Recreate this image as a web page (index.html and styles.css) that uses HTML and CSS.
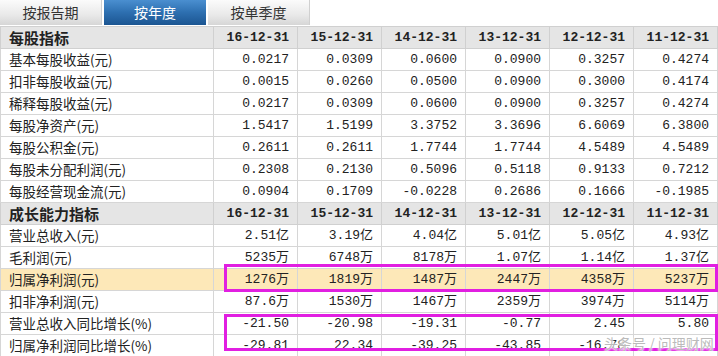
FILE: index.html
```html
<!DOCTYPE html>
<html lang="zh">
<head>
<meta charset="utf-8">
<link rel="stylesheet" href="styles.css">
</head>
<body>
<div class="page">
  <div class="tabs">
    <div class="tab">按报告期</div>
    <div class="tab active">按年度</div>
    <div class="tab">按单季度</div>
  </div>
  <table class="grid">
    <colgroup><col class="c0"><col class="cn"><col class="cn"><col class="cn"><col class="cn"><col class="cn"><col class="cn"></colgroup>
    <tr class="head"><th class="lab">每股指标</th><th>16-12-31</th><th>15-12-31</th><th>14-12-31</th><th>13-12-31</th><th>12-12-31</th><th>11-12-31</th></tr>
    <tr><td class="lab">基本每股收益(元)</td><td>0.0217</td><td>0.0309</td><td>0.0600</td><td>0.0900</td><td>0.3257</td><td>0.4274</td></tr>
    <tr><td class="lab">扣非每股收益(元)</td><td>0.0015</td><td>0.0260</td><td>0.0500</td><td>0.0900</td><td>0.3000</td><td>0.4174</td></tr>
    <tr><td class="lab">稀释每股收益(元)</td><td>0.0217</td><td>0.0309</td><td>0.0600</td><td>0.0900</td><td>0.3257</td><td>0.4274</td></tr>
    <tr><td class="lab">每股净资产(元)</td><td>1.5417</td><td>1.5199</td><td>3.3752</td><td>3.3696</td><td>6.6069</td><td>6.3800</td></tr>
    <tr><td class="lab">每股公积金(元)</td><td>0.2611</td><td>0.2611</td><td>1.7744</td><td>1.7744</td><td>4.5489</td><td>4.5489</td></tr>
    <tr><td class="lab">每股未分配利润(元)</td><td>0.2308</td><td>0.2130</td><td>0.5096</td><td>0.5118</td><td>0.9133</td><td>0.7212</td></tr>
    <tr><td class="lab">每股经营现金流(元)</td><td>0.0904</td><td>0.1709</td><td>-0.0228</td><td>0.2686</td><td>0.1666</td><td>-0.1985</td></tr>
    <tr class="head"><th class="lab">成长能力指标</th><th>16-12-31</th><th>15-12-31</th><th>14-12-31</th><th>13-12-31</th><th>12-12-31</th><th>11-12-31</th></tr>
    <tr><td class="lab">营业总收入(元)</td><td>2.51亿</td><td>3.19亿</td><td>4.04亿</td><td>5.01亿</td><td>5.05亿</td><td>4.93亿</td></tr>
    <tr><td class="lab">毛利润(元)</td><td>5235万</td><td>6748万</td><td>8178万</td><td>1.07亿</td><td>1.14亿</td><td>1.37亿</td></tr>
    <tr class="hl"><td class="lab">归属净利润(元)</td><td>1276万</td><td>1819万</td><td>1487万</td><td>2447万</td><td>4358万</td><td>5237万</td></tr>
    <tr><td class="lab">扣非净利润(元)</td><td>87.6万</td><td>1530万</td><td>1467万</td><td>2359万</td><td>3974万</td><td>5114万</td></tr>
    <tr><td class="lab">营业总收入同比增长(%)</td><td>-21.50</td><td>-20.98</td><td>-19.31</td><td>-0.77</td><td>2.45</td><td>5.80</td></tr>
    <tr><td class="lab">归属净利润同比增长(%)</td><td>-29.81</td><td>22.34</td><td>-39.25</td><td>-43.85</td><td>-16.78</td><td></td></tr>
  </table>
  <div class="mark mark1"></div>
  <div class="mark mark2"></div>
  <div class="watermark">头条号 / 问理财网</div>
</div>
</body>
</html>
```

FILE: styles.css
```css
html, body {
  margin: 0;
  padding: 0;
  background: #fff;
}
.page {
  position: relative;
  width: 718px;
  height: 356px;
  overflow: hidden;
  font-family: "Noto Sans CJK SC", sans-serif;
  color: #222;
}
.tabs {
  display: flex;
  gap: 2px;
  height: 25px;
  margin-bottom: 1px;
}
.tab {
  width: 102px;
  height: 25px;
  line-height: 25px;
  text-align: center;
  font-size: 14px;
  color: #333;
  background: linear-gradient(#fbfbfb, #e9e9e9 60%, #d6d6d6);
  box-sizing: border-box;
  border-right: 1px solid #d0d0d0;
}
.tab.active {
  color: #fff;
  background: linear-gradient(#4a8fd0, #2d6fb0 50%, #1b5591);
  border-right: none;
}
.grid {
  border-collapse: collapse;
  table-layout: fixed;
  width: 718px;
}
.c0 { width: 213px; }
.cn { width: 84px; }
.grid td, .grid th {
  height: 21px;
  padding: 0 8px 0 0;
  border: 1px solid #d6d6d6;
  text-align: right;
  font-family: "Liberation Mono", "Noto Sans CJK SC", monospace;
  font-size: 13px;
  line-height: 21px;
  white-space: nowrap;
  overflow: hidden;
}
.grid th {
  font-weight: bold;
  background: #e5e5e5;
  border-color: #d0d0d0;
}
.grid .lab {
  text-align: left;
  padding: 0 0 0 8px;
  font-family: "Noto Sans CJK SC", sans-serif;
  font-size: 13.5px;
  color: #222;
}
.grid th.lab {
  font-size: 15px;
  font-weight: bold;
}
.grid tr.hl td {
  background: #fde8b8;
}
.mark {
  position: absolute;
  left: 224px;
  width: 494px;
  box-sizing: border-box;
  border: 3px solid #e11fe1;
}
.mark1 {
  top: 264px;
  height: 28px;
}
.mark2 {
  top: 314px;
  height: 37px;
}
.watermark {
  position: absolute;
  left: 604px;
  top: 333px;
  font-size: 14px;
  color: rgba(175, 175, 175, 0.85);
  text-shadow: 0 0 2px #fff, 0 0 2px #fff, 0 0 3px #fff;
  white-space: nowrap;
}
```
